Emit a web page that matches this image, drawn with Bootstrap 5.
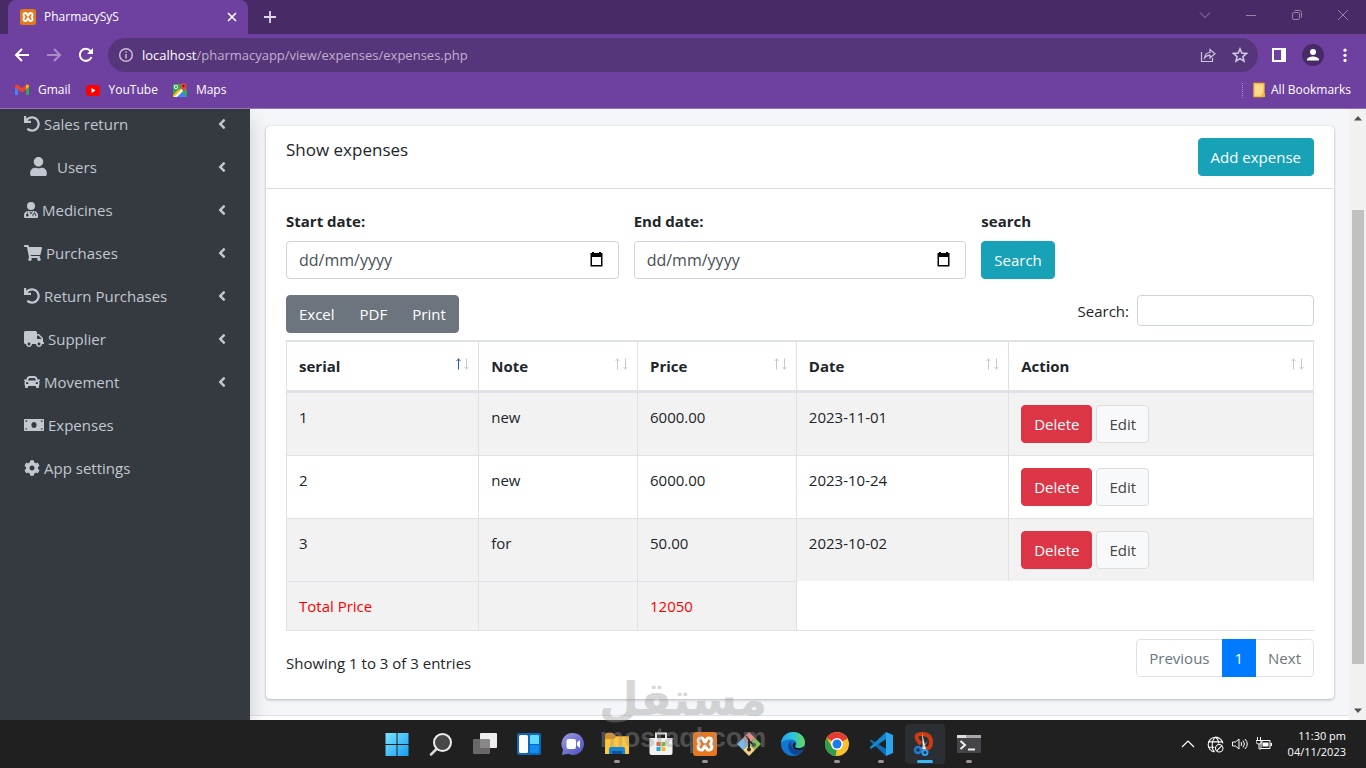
<!DOCTYPE html>
<html lang="en">
<head>
<meta charset="utf-8">
<meta name="viewport" content="width=device-width, initial-scale=1">
<title>PharmacySyS</title>
<link href="https://cdn.jsdelivr.net/npm/bootstrap@5.3.0/dist/css/bootstrap.min.css" rel="stylesheet">
<style>
  body { --bs-body-font-family: "Open Sans", "Noto Sans", sans-serif; font-size: 15px; line-height: 24px; color: #212529; height: 100vh; min-height: 600px; overflow: hidden; }
  button, input { font-family: inherit; }
  svg { display: block; flex: none; }

  /* browser window */
  .chrome-ui { background: #6e41a0; color: #fff; font-size: 12px; line-height: 16px; border-bottom: 1px solid #9272b6; }
  .chrome-ui button { background: none; border: 0; padding: 0; color: inherit; }
  .tab-strip { background: #472a66; height: 34px; }
  .tab-active { background: #6e41a0; width: 240px; margin-left: 8px; padding: 0 10px 0 12px; border-radius: 8px 8px 0 0; }
  .window-keys { color: #9683a8; gap: 32px; padding-right: 16px; }
  .tool-row { height: 42px; padding: 0 14px; }
  .address-bar { background: #55367a; height: 34px; border-radius: 17px; padding: 0 10px; margin: 0 14px; }
  .address-text { font-size: 13px; color: #c0b0d0; }
  .address-text b { font-weight: 400; color: #fff; }
  .mark-row { height: 32px; padding: 0 15px 4px 14px; gap: 14px; }
  .mark-row a { color: #fff; text-decoration: none; }
  .mark-rule { border-left: 1px dotted #a88fc4; height: 15px; }

  /* sidebar */
  .side { width: 250px; background: #343a40; box-shadow: 0 10px 20px rgba(0,0,0,.18); z-index: 1; padding-top: 2px; }
  .side a { color: #c2c7d0; height: 43px; padding: 0 24px 18px 24px; text-decoration: none; gap: 4px; }
  .side svg { fill: currentColor; }

  /* content */
  .page-area { background: #f4f6f9; }
  .page-body { padding: 17px 15px 16px 16px; }
  .panel { background: #fff; border-radius: 4px; box-shadow: 0 0 1px rgba(0,0,0,.2), 0 1px 3px rgba(0,0,0,.25); }
  .panel-head { padding: 12px 20px; border-bottom: 1px solid #dfdfdf; }
  .panel-head h1 { font-size: 17px; line-height: 24px; font-weight: 400; margin: 0; }
  .panel-body { padding: 20px 20px 22px; }
  .panel-foot { background: #fff; border-top: 1px solid #dee2e6; }
  .btn { --bs-btn-font-size: 15px; --bs-btn-line-height: 24px; --bs-btn-border-radius: 4px; white-space: nowrap; }
  .btn-teal { --bs-btn-bg: #17a2b8; --bs-btn-border-color: #17a2b8; --bs-btn-color: #fff; --bs-btn-hover-bg: #138496; --bs-btn-hover-color: #fff; }
  .btn-danger { --bs-btn-bg: #dc3545; }
  .btn-light { --bs-btn-border-color: #ddd; --bs-btn-color: #444; }
  .filters { --bs-gutter-x: 15px; }
  .filters label { font-weight: 700; margin-bottom: 8px; display: block; }
  .form-control { font-size: 16px; line-height: 24px; border-color: #ced4da; border-radius: 4px; }
  .form-control::placeholder { color: #495057; }
  .date-icon { right: 14px; top: 11px; }
  .table-tools { margin-bottom: 7px; }
  .find-box { width: 177px; height: 31px; }

  .ledger { border-collapse: separate; border-spacing: 0; table-layout: fixed; border-top: 1px solid #dee2e6; border-bottom: 1px solid #dee2e6; --bs-table-striped-bg: #f2f2f2; }
  .ledger > :not(caption) > * > * { padding: 12px; border: 0 solid #dee2e6; border-top-width: 1px; border-left-width: 1px; vertical-align: top; }
  .ledger > thead > tr > th { border-bottom-width: 2px; padding-right: 8px; }
  .ledger > :not(caption) > * > :nth-child(5) { border-right-width: 1px; }
  .ledger > tfoot > tr > td { background: #f2f2f2; color: #f00; }
  .ledger > tfoot > tr > td:nth-child(4) { background: #fff; border-top-width: 0; }
  .ledger .sort { width: 15px; height: 12px; margin-top: 4px; fill: none; stroke: #c5c8ca; }
  .ledger .sort .on { stroke: #22599c; }
  .pagination { --bs-pagination-font-size: 15px; --bs-pagination-color: #6c757d; --bs-pagination-active-bg: #007bff; --bs-pagination-active-border-color: #007bff; --bs-pagination-border-radius: 4px; --bs-pagination-focus-box-shadow: none; }

  /* scrollbar */
  .scroll-track { width: 17px; background: #f1f1f1; padding: 7px 2px; }
  .scroll-thumb { background: #c1c1c1; width: 12px; }

  /* taskbar */
  .task-bar { display: grid; grid-template-columns: 1fr auto 1fr; background: #202020; height: 48px; color: #fff; font-size: 11px; line-height: 16px; }
  .task-bar button { background: none; border: 0; padding: 0; }
  .task-app { width: 44px; height: 48px; display: flex; align-items: center; justify-content: center; position: relative; }
  .task-app svg { width: 24px; height: 24px; }
  .task-app.open::after { content: ""; position: absolute; bottom: 5px; width: 6px; height: 3px; border-radius: 2px; background: #a09098; }
  .task-app.current::before { content: ""; position: absolute; inset: 4px 2px; border-radius: 4px; background: #2b2f33; }
  .task-app.current svg { position: relative; }
  .task-app.current::after { width: 16px; background: #35b8f5; }
  .stamp { inset: auto 0 16px 0; gap: 3px; pointer-events: none; color: #999; opacity: .38; z-index: 3; font-weight: 700; }
  .stamp-ar { font-family: "DejaVu Sans", sans-serif; font-size: 46px; line-height: 46px; }
  .stamp-la { font-family: "Liberation Sans", sans-serif; font-size: 27px; line-height: 27px; }
</style>
</head>
<body class="d-flex flex-column position-relative">

<header class="chrome-ui">
  <div class="tab-strip d-flex align-items-stretch">
    <div class="tab-active d-flex align-items-center">
      <svg width="16" height="16" viewBox="0 0 24 24"><rect width="24" height="24" rx="4" fill="#e4791c"/><path id="xampp" d="M8.500 6C4.500 6 4.500 9.500 6.500 12 4.500 14.500 4.500 18 8.500 18 11 18 10.500 14 12 14s1 4 3.500 4c4 0 4-3.500 2-6 2-2.500 2-6-2-6-2.500 0-2 4-3.500 4S11 6 8.500 6z" fill="none" stroke="#fff" stroke-width="3"/></svg>
      <span class="ms-2 me-auto">PharmacySyS</span>
      <button aria-label="Close tab"><svg width="12" height="12" viewBox="0 0 12 12" stroke="#fff" stroke-width="1.600"><path d="M2 2l8 8M10 2l-8 8"/></svg></button>
    </div>
    <button class="ms-3" aria-label="New tab"><svg width="12" height="12" viewBox="0 0 12 12" stroke="#e0d8e8" stroke-width="1.800"><path d="M6 0v12M0 6h12"/></svg></button>
    <div class="window-keys d-flex align-items-center ms-auto pb-1">
      <button aria-label="Search tabs"><svg width="14" height="14" viewBox="0 0 14 14" fill="none" stroke="currentColor"><path d="M2 4.500l5 5 5-5"/></svg></button>
      <button aria-label="Minimize"><svg width="14" height="14" viewBox="0 0 14 14" stroke="currentColor"><path d="M2 7.500h10"/></svg></button>
      <button aria-label="Restore"><svg width="14" height="14" viewBox="0 0 14 14" fill="none" stroke="currentColor"><rect x="2.500" y="4.500" width="7" height="7" rx="1.500"/><path d="M4.500 2.500h5a2 2 0 0 1 2 2v5"/></svg></button>
      <button aria-label="Close"><svg width="14" height="14" viewBox="0 0 14 14" stroke="currentColor"><path d="M2 2l10 10M12 2L2 12"/></svg></button>
    </div>
  </div>
  <div class="tool-row d-flex align-items-center">
    <div class="d-flex align-items-center gap-3">
      <button aria-label="Back"><svg width="16" height="16" viewBox="0 0 16 16" fill="none" stroke="#fff" stroke-width="2"><path d="M15 8H2M8 2L2 8l6 6"/></svg></button>
      <button aria-label="Forward"><svg width="16" height="16" viewBox="0 0 16 16" fill="none" stroke="#a78dc4" stroke-width="2"><path d="M1 8h13M8 2l6 6-6 6"/></svg></button>
      <button aria-label="Reload"><svg width="16" height="16" viewBox="0 0 16 16" fill="none" stroke="#fff" stroke-width="2"><path d="M13.500 10A6 6 0 1 1 12.500 4"/><path d="M15 1v6H9z" fill="#fff" stroke="none"/></svg></button>
    </div>
    <div class="address-bar d-flex align-items-center flex-grow-1">
      <svg width="16" height="16" viewBox="0 0 16 16" fill="none" stroke="#c9bcd6" stroke-width="1.500"><circle cx="8" cy="8" r="6.300"/><path d="M8 7v4.500M8 4.300v1.500"/></svg>
      <span class="address-text ms-2 me-auto"><b>localhost</b>/pharmacyapp/view/expenses/expenses.php</span>
      <button aria-label="Share"><svg width="16" height="16" viewBox="0 0 16 16" fill="none" stroke="#cfc4da" stroke-width="1.200"><path d="M1.500 5v9.500h11V11M4.500 11c.5-4 2.500-5.500 5.500-5.500V2.500l5 4.300-5 4.200V8.200C7.500 8.200 6 9 4.500 11z"/></svg></button>
      <button class="ms-3" aria-label="Bookmark"><svg width="16" height="16" viewBox="0 0 16 16" fill="none" stroke="#d6cce0" stroke-width="1.500"><path d="M8 1.800l1.800 4.300 4.700.4-3.600 3.100 1.100 4.600L8 11.700l-4 2.500 1.100-4.600L1.500 6.500l4.700-.4z"/></svg></button>
    </div>
    <button aria-label="Side panel"><svg width="14" height="14" viewBox="0 0 14 14"><path fill="#fff" fill-rule="evenodd" d="M0 0h14v14H0zM2 2v10h7V2z"/></svg></button>
    <button class="mx-3" aria-label="Profile"><svg width="22" height="22" viewBox="0 0 22 22"><circle cx="11" cy="11" r="11" fill="#472a66"/><g fill="#fff"><circle cx="11" cy="8" r="3"/><path d="M5 16.500v-1c0-2 4-3 6-3s6 1 6 3v1z"/></g></svg></button>
    <button aria-label="Menu"><svg width="12" height="16" viewBox="0 0 12 16" fill="#fff"><circle cx="5" cy="3.200" r="1.600"/><circle cx="5" cy="8.300" r="1.600"/><circle cx="5" cy="13.400" r="1.600"/></svg></button>
  </div>
  <nav class="mark-row d-flex align-items-center" aria-label="Bookmarks">
    <a href="#" class="d-flex align-items-center gap-2"><svg width="16" height="16" viewBox="0 0 16 16"><path d="M1 4v9h3V7z" fill="#4285f4"/><path d="M15 4v9h-3V7z" fill="#34a853"/><path d="M1 4.500C1 2.600 3 2.300 4 3l4 3 4-3v4.500l-4 3-4-3-3-2z" fill="#ea4335"/><path d="M12 3c1.500-1 3-.3 3 1.500L12 7.500z" fill="#fbbc04"/></svg>Gmail</a>
    <a href="#" class="d-flex align-items-center gap-2"><svg width="16" height="16" viewBox="0 0 16 16"><rect x="1" y="3" width="14" height="11" rx="3" fill="#f00"/><path d="M6.500 6v5l4-2.500z" fill="#fff"/></svg>YouTube</a>
    <a href="#" class="d-flex align-items-center gap-2"><svg width="16" height="16" viewBox="0 0 16 16"><path d="M1 2h9l5 6v7H1z" fill="#34a853"/><path d="M4 15l5-6 6 6z" fill="#4285f4"/><path d="M1 15L12 4l2 2-9 9z" fill="#fff"/><path d="M1 13l6-6 1.500 1.500L2 15z" fill="#fbbc04"/><path d="M11.500 9.500C9.500 7 8.500 6 8.500 4a3 3 0 0 1 6 0c0 2-1 3-3 5.500z" fill="#ea4335"/><circle cx="11.500" cy="4" r="1.200" fill="#811"/><circle cx="4" cy="5" r="1.700" fill="none" stroke="#fff"/></svg>Maps</a>
    <span class="ms-auto d-flex align-items-center gap-2">
      <span class="mark-rule"></span>
      <a href="#" class="d-flex align-items-center gap-1"><svg width="16" height="16" viewBox="0 0 16 16"><path d="M3 1.500h10v11.500h-2v1.500H3z" fill="#fdd890" stroke="#f5b829" stroke-width="1.300"/><path d="M11 15v-3.500h3V15z" fill="#f5b829"/></svg>All Bookmarks</a>
    </span>
  </nav>
</header>

<div class="d-flex flex-grow-1 overflow-hidden">
  <aside class="side flex-shrink-0">
    <nav aria-label="Sections">
      <a href="#" class="d-flex align-items-center"><svg width="16" height="16" viewBox="0 0 512 512"><path id="undo" d="M212.333 224.333H12c-6.627 0-12-5.373-12-12V12C0 5.373 5.373 0 12 0h48c6.627 0 12 5.373 12 12v78.112C117.773 39.279 184.260 7.470 258.175 8.007c136.906.994 246.448 111.623 246.157 248.532C504.041 393.258 393.120 504 256.333 504c-64.089 0-122.496-24.313-166.510-64.215-5.099-4.622-5.334-12.554-.467-17.420l33.967-33.967c4.474-4.474 11.662-4.717 16.401-.525C170.760 415.336 211.580 432 256.333 432c97.268 0 176-78.716 176-176 0-97.267-78.716-176-176-176-58.496 0-110.280 28.476-142.274 72.333h98.274c6.627 0 12 5.373 12 12v48c0 6.627-5.373 12-12 12z"/></svg><span>Sales return</span><svg class="ms-auto" width="8" height="16" viewBox="0 0 256 512"><path id="caret" d="M31.700 239l136-136c9.400-9.400 24.600-9.400 33.900 0l22.600 22.600c9.400 9.400 9.400 24.600 0 33.900L127.900 256l96.400 96.400c9.400 9.400 9.400 24.600 0 33.900L201.700 409c-9.400 9.400-24.600 9.400-33.900 0l-136-136c-9.500-9.400-9.500-24.600-.1-34z"/></svg></a>
      <a href="#" class="d-flex align-items-center"><svg width="29" height="19" viewBox="0 0 448 512"><path d="M224 256c70.700 0 128-57.300 128-128S294.700 0 224 0 96 57.300 96 128s57.300 128 128 128zm89.600 32h-16.700c-22.200 10.200-46.900 16-72.900 16s-50.600-5.800-72.900-16h-16.700C60.200 288 0 348.200 0 422.400V464c0 26.500 21.500 48 48 48h352c26.500 0 48-21.500 48-48v-41.600c0-74.200-60.200-134.400-134.400-134.400z"/></svg><span>Users</span><svg class="ms-auto" width="8" height="16" viewBox="0 0 256 512"><use href="#caret"/></svg></a>
      <a href="#" class="d-flex align-items-center"><svg width="14" height="16" viewBox="0 0 448 512"><circle cx="224" cy="128" r="128"/><path fill-rule="evenodd" d="M134 288h180c74 0 134 60 134 134v60c0 16-14 30-30 30H30c-16 0-30-14-30-30v-60c0-74 60-134 134-134zM104 300v70c-24 8-40 26-40 50s18 44 42 44 42-18 42-44-16-42-28-48v-72zM224 400l-60-100h30l30 45 30-45h30zM320 300v60c-30 6-48 26-48 56v40h28v-44c0-20 12-30 30-30s30 10 30 30v44h28v-46c0-28-16-44-48-52v-58z"/></svg><span>Medicines</span><svg class="ms-auto" width="8" height="16" viewBox="0 0 256 512"><use href="#caret"/></svg></a>
      <a href="#" class="d-flex align-items-center"><svg width="18" height="16" viewBox="0 0 576 512"><path d="M528.120 301.319l47.273-208C578.806 78.301 567.391 64 551.990 64H159.208l-9.166-44.810C147.758 8.021 137.930 0 126.529 0H24C10.745 0 0 10.745 0 24v16c0 13.255 10.745 24 24 24h69.883l70.248 343.435C147.325 417.100 136 435.222 136 456c0 30.928 25.072 56 56 56s56-25.072 56-56c0-15.674-6.447-29.835-16.824-40h209.647C430.447 426.165 424 440.326 424 456c0 30.928 25.072 56 56 56s56-25.072 56-56c0-22.172-12.888-41.332-31.579-50.405l5.517-24.276c3.413-15.018-8.002-29.319-23.403-29.319H218.117l-6.545-32h293.145c11.206 0 20.920-7.754 23.403-18.681z"/></svg><span>Purchases</span><svg class="ms-auto" width="8" height="16" viewBox="0 0 256 512"><use href="#caret"/></svg></a>
      <a href="#" class="d-flex align-items-center"><svg width="16" height="16" viewBox="0 0 512 512"><use href="#undo"/></svg><span>Return Purchases</span><svg class="ms-auto" width="8" height="16" viewBox="0 0 256 512"><use href="#caret"/></svg></a>
      <a href="#" class="d-flex align-items-center"><svg width="20" height="16" viewBox="0 0 640 512"><path d="M624 352h-16V243.900c0-12.700-5.100-24.900-14.100-33.900L494 110.100c-9-9-21.200-14.100-33.900-14.100H416V48c0-26.500-21.500-48-48-48H48C21.500 0 0 21.500 0 48v320c0 26.500 21.500 48 48 48h16c0 53 43 96 96 96s96-43 96-96h128c0 53 43 96 96 96s96-43 96-96h48c8.800 0 16-7.200 16-16v-32c0-8.800-7.200-16-16-16zM160 464c-26.500 0-48-21.500-48-48s21.500-48 48-48 48 21.500 48 48-21.500 48-48 48zm320 0c-26.500 0-48-21.500-48-48s21.500-48 48-48 48 21.500 48 48-21.500 48-48 48zm80-208H416V144h44.100l99.900 99.900V256z"/></svg><span>Supplier</span><svg class="ms-auto" width="8" height="16" viewBox="0 0 256 512"><use href="#caret"/></svg></a>
      <a href="#" class="d-flex align-items-center"><svg width="16" height="16" viewBox="0 0 512 512"><path d="M499.990 176h-59.870l-16.640-41.600C406.380 91.630 365.570 64 319.500 64h-127c-46.060 0-86.880 27.630-103.990 70.400L71.870 176H12.010C4.200 176-1.530 183.340.370 190.910l6 24C7.700 220.250 12.500 224 18.010 224h20.070C24.650 235.730 16 252.780 16 272v48c0 16.120 6.160 30.670 16 41.930V416c0 17.670 14.330 32 32 32h32c17.670 0 32-14.330 32-32v-32h256v32c0 17.670 14.330 32 32 32h32c17.670 0 32-14.330 32-32v-54.070c9.840-11.250 16-25.800 16-41.930v-48c0-19.220-8.650-36.270-22.070-48H494c5.510 0 10.310-3.750 11.640-9.090l6-24c1.890-7.570-3.840-14.910-11.650-14.910zm-352.060-17.830c7.290-18.220 24.940-30.170 44.570-30.170h127c19.630 0 37.280 11.950 44.570 30.170L384 208H128l19.930-49.830zM96 319.800c-19.200 0-32-12.760-32-31.900S76.800 256 96 256s48 28.710 48 47.850-28.800 15.950-48 15.950zm320 0c-19.200 0-48 3.190-48-15.950S396.800 256 416 256s32 12.760 32 31.900-12.800 31.900-32 31.900z"/></svg><span>Movement</span><svg class="ms-auto" width="8" height="16" viewBox="0 0 256 512"><use href="#caret"/></svg></a>
      <a href="#" class="d-flex align-items-center"><svg width="20" height="16" viewBox="0 0 20 16"><path fill-rule="evenodd" d="M.700 2h18.600c.4 0 .7.300.7.700v10.600c0 .4-.3.700-.7.700H.700c-.4 0-.7-.3-.7-.7V2.700C0 2.300.3 2 .7 2zM10 5c-1.500 0-2.600 1.300-2.600 3s1.100 3 2.600 3 2.600-1.300 2.600-3S11.500 5 10 5zM1.500 5A2 2 0 0 0 3.500 3.500h-2zM18.500 5a2 2 0 0 1-2-1.500h2zM1.500 11a2 2 0 0 1 2 1.500h-2zM18.500 11a2 2 0 0 0-2 1.500h2z"/></svg><span>Expenses</span></a>
      <a href="#" class="d-flex align-items-center"><svg width="16" height="16" viewBox="0 0 512 512"><path d="M487.400 315.700l-42.600-24.600c4.300-23.200 4.300-47 0-70.200l42.600-24.600c4.900-2.800 7.100-8.600 5.500-14-11.100-35.600-30-67.800-54.700-94.600-3.800-4.100-10-5.100-14.800-2.300L380.800 110c-17.900-15.400-38.500-27.300-60.800-35.100V25.800c0-5.600-3.900-10.500-9.400-11.700-36.700-8.200-74.300-7.800-109.200 0-5.500 1.200-9.400 6.100-9.400 11.700V75c-22.200 7.900-42.800 19.800-60.800 35.100L88.700 85.500c-4.900-2.800-11-1.900-14.800 2.300-24.700 26.700-43.600 58.900-54.700 94.600-1.700 5.400.6 11.200 5.500 14L67.300 221c-4.300 23.200-4.300 47 0 70.200l-42.600 24.600c-4.900 2.800-7.100 8.600-5.500 14 11.100 35.600 30 67.800 54.700 94.600 3.800 4.100 10 5.100 14.800 2.300l42.600-24.600c17.900 15.400 38.500 27.300 60.800 35.100v49.200c0 5.600 3.900 10.500 9.400 11.700 36.700 8.200 74.300 7.800 109.200 0 5.500-1.200 9.400-6.100 9.400-11.700v-49.200c22.200-7.900 42.800-19.800 60.800-35.100l42.600 24.600c4.900 2.800 11 1.900 14.800-2.300 24.700-26.700 43.600-58.900 54.700-94.600 1.500-5.500-.7-11.300-5.600-14.100zM256 336c-44.100 0-80-35.900-80-80s35.900-80 80-80 80 35.900 80 80-35.900 80-80 80z"/></svg><span>App settings</span></a>
    </nav>
  </aside>

  <div class="page-area flex-grow-1 d-flex flex-column overflow-hidden">
    <main class="page-body">
      <section class="panel">
        <div class="panel-head d-flex justify-content-between align-items-start">
          <h1>Show expenses</h1>
          <button class="btn btn-teal">Add expense</button>
        </div>
        <div class="panel-body">
          <form class="row filters mb-3">
            <div class="col-4">
              <label for="start">Start date:</label>
              <div class="position-relative">
                <input id="start" type="text" class="form-control" placeholder="dd/mm/yyyy">
                <svg class="date-icon position-absolute" width="16" height="16" viewBox="0 0 16 16"><path fill-rule="evenodd" d="M3 0h2v1h5V0h2v1h1.500v13.500h-12V1H3zM3 5v8h9V5z"/></svg>
              </div>
            </div>
            <div class="col-4">
              <label for="end">End date:</label>
              <div class="position-relative">
                <input id="end" type="text" class="form-control" placeholder="dd/mm/yyyy">
                <svg class="date-icon position-absolute" width="16" height="16" viewBox="0 0 16 16"><path fill-rule="evenodd" d="M3 0h2v1h5V0h2v1h1.500v13.500h-12V1H3zM3 5v8h9V5z"/></svg>
              </div>
            </div>
            <div class="col-4">
              <label for="go">search</label>
              <button id="go" type="button" class="btn btn-teal">Search</button>
            </div>
          </form>
          <div class="table-tools d-flex justify-content-between align-items-start">
            <div class="btn-group">
              <button class="btn btn-secondary">Excel</button>
              <button class="btn btn-secondary">PDF</button>
              <button class="btn btn-secondary">Print</button>
            </div>
            <div class="d-flex align-items-center gap-2">
              <label for="find">Search:</label>
              <input id="find" type="search" class="form-control find-box">
            </div>
          </div>
          <table class="table table-striped ledger mb-2">
            <colgroup><col style="width:18.700%"><col style="width:15.450%"><col style="width:15.450%"><col style="width:20.650%"><col></colgroup>
            <thead>
              <tr>
                <th><div class="d-flex justify-content-between">serial<svg class="sort" viewBox="0 0 15 12"><path class="on" d="M3.500 11.500v-11M1.500 3l2-2 2 2"/><path d="M11.500.5v11M9.500 9l2 2 2-2"/></svg></div></th>
                <th><div class="d-flex justify-content-between">Note<svg class="sort" viewBox="0 0 15 12"><path d="M3.500 11.500v-11M1.500 3l2-2 2 2M11.500.5v11M9.500 9l2 2 2-2"/></svg></div></th>
                <th><div class="d-flex justify-content-between">Price<svg class="sort" viewBox="0 0 15 12"><path d="M3.500 11.500v-11M1.500 3l2-2 2 2M11.500.5v11M9.500 9l2 2 2-2"/></svg></div></th>
                <th><div class="d-flex justify-content-between">Date<svg class="sort" viewBox="0 0 15 12"><path d="M3.500 11.500v-11M1.500 3l2-2 2 2M11.500.5v11M9.500 9l2 2 2-2"/></svg></div></th>
                <th><div class="d-flex justify-content-between">Action<svg class="sort" viewBox="0 0 15 12"><path d="M3.500 11.500v-11M1.500 3l2-2 2 2M11.500.5v11M9.500 9l2 2 2-2"/></svg></div></th>
              </tr>
            </thead>
            <tbody>
              <tr><td>1</td><td>new</td><td>6000.00</td><td>2023-11-01</td><td><div class="d-flex gap-1"><button class="btn btn-danger">Delete</button><button class="btn btn-light">Edit</button></div></td></tr>
              <tr><td>2</td><td>new</td><td>6000.00</td><td>2023-10-24</td><td><div class="d-flex gap-1"><button class="btn btn-danger">Delete</button><button class="btn btn-light">Edit</button></div></td></tr>
              <tr><td>3</td><td>for</td><td>50.00</td><td>2023-10-02</td><td><div class="d-flex gap-1"><button class="btn btn-danger">Delete</button><button class="btn btn-light">Edit</button></div></td></tr>
            </tbody>
            <tfoot>
              <tr><td>Total Price</td><td></td><td>12050</td><td colspan="2"></td></tr>
            </tfoot>
          </table>
          <div class="d-flex justify-content-between">
            <div class="pt-2 mt-1">Showing 1 to 3 of 3 entries</div>
            <ul class="pagination mb-0">
              <li class="page-item"><a class="page-link" href="#">Previous</a></li>
              <li class="page-item active"><a class="page-link" href="#">1</a></li>
              <li class="page-item"><a class="page-link" href="#">Next</a></li>
            </ul>
          </div>
        </div>
      </section>
    </main>
    <footer class="panel-foot flex-grow-1"></footer>
  </div>

  <div class="scroll-track d-flex flex-column align-items-center flex-shrink-0">
    <svg width="8" height="5" viewBox="0 0 8 5"><path d="M4 0l4 4.500H0z" fill="#505050"/></svg>
    <div class="scroll-thumb mb-auto" style="height:76%;margin-top:89px"></div>
    <svg width="8" height="5" viewBox="0 0 8 5"><path d="M4 5l4-4.500H0z" fill="#505050"/></svg>
  </div>
</div>

<footer class="task-bar flex-shrink-0">
  <span></span>
  <nav class="d-flex" aria-label="Taskbar">
    <button class="task-app" aria-label="Start"><svg viewBox="0 0 24 24"><defs><linearGradient id="win" x2="1" y2="1"><stop stop-color="#7be4ff"/><stop offset="1" stop-color="#189df0"/></linearGradient></defs><path fill="url(#win)" d="M.500 1h11v11h-11zM12.500 1h11v11h-11zM.500 13h11v11h-11zM12.500 13h11v11h-11z"/></svg></button>
    <button class="task-app" aria-label="Search"><svg viewBox="0 0 24 24"><path d="M7.500 17L2 22.500" stroke="#d8d8d8" stroke-width="2.500" stroke-linecap="round"/><circle cx="13.500" cy="10.500" r="8.500" fill="#484848" stroke="#eee" stroke-width="2"/></svg></button>
    <button class="task-app" aria-label="Task view"><svg viewBox="0 0 24 24"><rect x="7" y="1" width="17" height="15" rx="1" fill="#eee"/><rect y="7" width="17" height="15" rx="1" fill="#777574" opacity=".85"/></svg></button>
    <button class="task-app" aria-label="Widgets"><svg viewBox="0 0 24 24"><rect y="1" width="24" height="22" rx="2" fill="#0f67b8"/><rect x="2" y="3" width="9" height="18" rx="1.500" fill="#fff"/><rect x="13" y="3" width="9" height="9" rx="1" fill="#61dcff"/><rect x="13" y="13" width="9" height="8" rx="1" fill="#108ff0"/></svg></button>
    <button class="task-app" aria-label="Chat"><svg viewBox="0 0 24 24"><defs><linearGradient id="cht" x2="1" y2="1"><stop stop-color="#9a9cdf"/><stop offset="1" stop-color="#4c4fbf"/></linearGradient></defs><path fill="url(#cht)" d="M12 1a11 11 0 1 1-5 20.800L1 23l1-5.500A11 11 0 0 1 12 1z"/><rect x="5.500" y="7" width="9.500" height="10" rx="2" fill="#fff"/><path d="M16 10.500l3-2.500v8l-3-2.500z" fill="#fff"/></svg></button>
    <button class="task-app open" aria-label="File Explorer"><svg viewBox="0 0 24 24"><path d="M0 3q0-2 2-2h6l3 3h12q1 0 1 1v5H0z" fill="#e08e1c"/><path d="M0 7h9l2-2h12q1 0 1 1v16H0z" fill="#ffc738"/><path d="M4 22v-5q0-2 2-2h12q2 0 2 2v5z" fill="#1682d4"/><path d="M7 19h10v3H7z" fill="#0c5598"/></svg></button>
    <button class="task-app" aria-label="Store"><svg viewBox="0 0 24 24"><path d="M7 6V1.500h10V6" fill="none" stroke="#e6e6e6" stroke-width="2"/><path d="M.500 6h23v15q0 2-2 2h-19q-2 0-2-2z" fill="#f1f1f1"/><path fill="#e75427" d="M7.500 10h4v4h-4z"/><path fill="#7db93d" d="M12.500 10h4v4h-4z"/><path fill="#20a4e8" d="M7.500 15h4v4h-4z"/><path fill="#f9ba27" d="M12.500 15h4v4h-4z"/></svg></button>
    <button class="task-app open" aria-label="XAMPP"><svg viewBox="0 0 24 24"><rect width="24" height="24" rx="3" fill="#e87722"/><use href="#xampp"/></svg></button>
    <button class="task-app" aria-label="Git"><svg viewBox="0 0 24 24"><path d="M12 0l6 6-6 6-6-6z" fill="#ec8b85"/><path d="M18 6l6 6-6 6-6-6z" fill="#83c450"/><path d="M6 6l6 6-6 6-6-6z" fill="#79b9ef"/><path d="M12 12l6 6-6 6-6-6z" fill="#f6d487"/><path d="M9 4l3 4v9M12 9l5 4" stroke="#2b2b2b" stroke-width="2" fill="none"/><circle cx="12" cy="17.500" r="2" fill="#2b2b2b"/><circle cx="17" cy="13" r="2" fill="#2b2b2b"/></svg></button>
    <button class="task-app" aria-label="Edge"><svg viewBox="0 0 24 24"><defs><linearGradient id="edg"><stop stop-color="#239df0"/><stop offset=".5" stop-color="#2cc6dc"/><stop offset="1" stop-color="#64d84e"/></linearGradient></defs><circle cx="12" cy="12" r="12" fill="#1276ce"/><path d="M0 11C1 4 6 0 12 0c7 0 12 5 12 10.500 0 4-3 5.500-6 5.500-4 0-4-2-3-3 1-2 0-5-4-5.500C6 7 1.500 9 0 11z" fill="url(#edg)"/><path d="M10 9c-5 4-3 12 4 14 4-.500 7-2.500 9-6-4 2.500-10 2-12-2-1-2-.5-4-1-6z" fill="#0d4598"/><path d="M14.500 13c-1 1.500-.5 3.200 3.500 3.200 2 0 4.500-.7 5.500-2.700l-.5 3.500c-5 3-11 1-11.500-3 0-2 1-3.500 2-3.500 1.200 0 1.700 1.200 1 2.500z" fill="#202020"/></svg></button>
    <button class="task-app open" aria-label="Chrome"><svg viewBox="0 0 24 24"><circle cx="12" cy="12" r="12" fill="#fbc02d"/><path d="M12 12L1.600 6A12 12 0 0 1 22.400 6.500z" fill="#e53935"/><path d="M22.400 6H12v6z" fill="#e53935"/><path d="M1.600 6L7 15l5 3-1.500 6A12 12 0 0 1 1.600 6z" fill="#2e9e4a"/><path d="M11 24l6-9-5 2z" fill="#fbc02d"/><circle cx="12" cy="12" r="6" fill="#fff"/><circle cx="12" cy="12" r="4.500" fill="#1b7bea"/></svg></button>
    <button class="task-app open" aria-label="Visual Studio Code"><svg viewBox="0 0 24 24"><path d="M2 7.500L.500 8.500 17 24l1-6.500z" fill="#0d6db5"/><path d="M17 0L.500 15.500 2 17 18 6.500z" fill="#1587d0"/><path d="M17 0l7 3v18l-7 3z" fill="#2aa5f0"/></svg></button>
    <button class="task-app open current" aria-label="Snipping Tool"><svg viewBox="0 0 24 24"><path d="M8 12C1 5 3 2 9 2c7 0 9 4 9 8 0 5-2 6-5 7" fill="none" stroke="#cf3a12" stroke-width="4"/><path d="M9 1l4 16-3 1z" fill="#eee"/><path d="M15 9L7 17l2 1z" fill="#b9b9b9"/><circle cx="5" cy="18" r="3" fill="none" stroke="#1d7cd6" stroke-width="2.500"/><circle cx="12" cy="20.500" r="2.500" fill="none" stroke="#2a9df0" stroke-width="2.200"/></svg></button>
    <button class="task-app open" aria-label="Terminal"><svg viewBox="0 0 24 24"><rect y="3" width="24" height="18" rx="1" fill="#444549"/><path d="M0 3h24v3H0z" fill="#aaa6ab"/><path d="M0 3h9v3H0z" fill="#ddd"/><path d="M3.500 9l4.500 4-4.500 4" fill="none" stroke="#eee" stroke-width="2"/><path d="M11 17.500h7" stroke="#eee" stroke-width="2"/></svg></button>
  </nav>
  <div class="d-flex align-items-center justify-content-end pe-3 me-1">
    <svg width="14" height="14" viewBox="0 0 14 14" fill="none" stroke="#fff" stroke-width="1.200"><path d="M1 10l6-6 6 6"/></svg>
    <svg class="ms-2 me-2 ps-1" width="21" height="17" viewBox="0 0 16 16" fill="none" stroke="#fff"><path d="M7 15A7 7 0 1 1 15 7M1 5.500h13M1 10.500h6M8 1C4 4 4 12 7 15M8 1c2 1.500 3 3.500 3 6"/><circle cx="11.500" cy="11.500" r="3.500"/><path d="M9 14l5-5"/></svg>
    <svg width="16" height="16" viewBox="0 0 16 16" fill="none" stroke="#fff"><path d="M.500 6h3L7 3v10l-3.500-3h-3zM9 6q1.500 2 0 4M11 4.500q3 3.500 0 7M13 3q4.500 5 0 10"/></svg>
    <svg class="ms-2" width="16" height="16" viewBox="0 0 16 16"><path d="M1.500 1v3M4.500 1v3M0 4.500h6v2Q5 8 3 8t-3-1.500zM3 8v5h2" fill="none" stroke="#fff"/><path d="M5 4.500h9v8H5z" fill="none" stroke="#fff"/><path d="M6.500 6.500h6v4h-6zM14.500 7H16v3h-1.500z" fill="#fff"/></svg>
    <div class="text-end ms-3"><div>11:30 pm</div><div>04/11/2023</div></div>
  </div>
</footer>

<div class="stamp position-absolute d-flex flex-column align-items-center">
  <div class="stamp-ar" lang="ar">مستقل</div>
  <div class="stamp-la">mostaql.com</div>
</div>

<script src="https://cdn.jsdelivr.net/npm/bootstrap@5.3.0/dist/js/bootstrap.bundle.min.js"></script>
</body>
</html>
